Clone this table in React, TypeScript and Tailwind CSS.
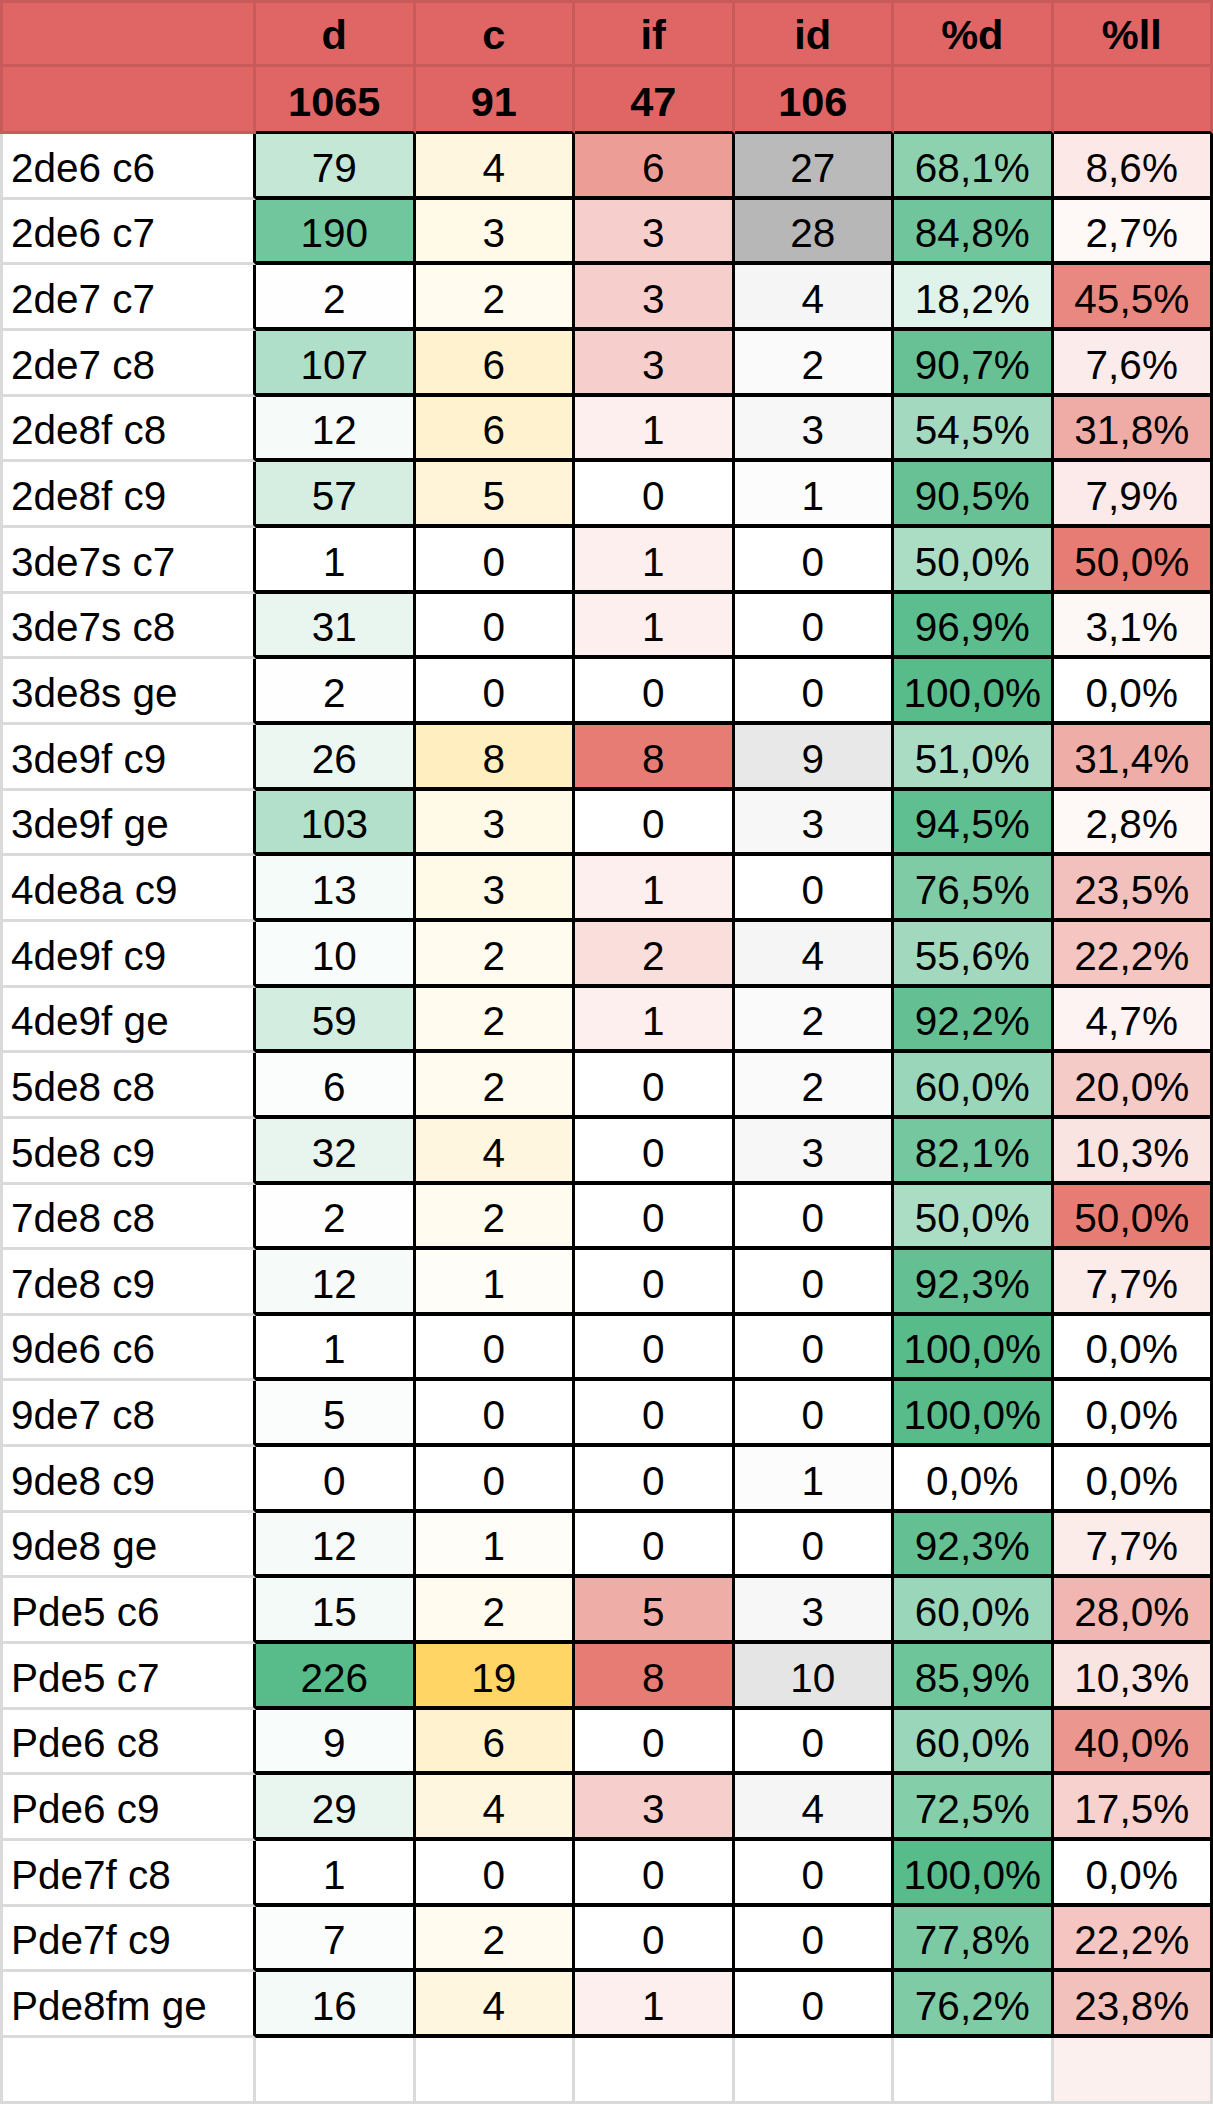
import type { CSSProperties, ReactNode } from 'react';

type Row = [string, number, number, number, number, string, string];

const rows: Row[] = [
  ['2de6 c6', 79, 4, 6, 27, '68,1%', '8,6%'],
  ['2de6 c7', 190, 3, 3, 28, '84,8%', '2,7%'],
  ['2de7 c7', 2, 2, 3, 4, '18,2%', '45,5%'],
  ['2de7 c8', 107, 6, 3, 2, '90,7%', '7,6%'],
  ['2de8f c8', 12, 6, 1, 3, '54,5%', '31,8%'],
  ['2de8f c9', 57, 5, 0, 1, '90,5%', '7,9%'],
  ['3de7s c7', 1, 0, 1, 0, '50,0%', '50,0%'],
  ['3de7s c8', 31, 0, 1, 0, '96,9%', '3,1%'],
  ['3de8s ge', 2, 0, 0, 0, '100,0%', '0,0%'],
  ['3de9f c9', 26, 8, 8, 9, '51,0%', '31,4%'],
  ['3de9f ge', 103, 3, 0, 3, '94,5%', '2,8%'],
  ['4de8a c9', 13, 3, 1, 0, '76,5%', '23,5%'],
  ['4de9f c9', 10, 2, 2, 4, '55,6%', '22,2%'],
  ['4de9f ge', 59, 2, 1, 2, '92,2%', '4,7%'],
  ['5de8 c8', 6, 2, 0, 2, '60,0%', '20,0%'],
  ['5de8 c9', 32, 4, 0, 3, '82,1%', '10,3%'],
  ['7de8 c8', 2, 2, 0, 0, '50,0%', '50,0%'],
  ['7de8 c9', 12, 1, 0, 0, '92,3%', '7,7%'],
  ['9de6 c6', 1, 0, 0, 0, '100,0%', '0,0%'],
  ['9de7 c8', 5, 0, 0, 0, '100,0%', '0,0%'],
  ['9de8 c9', 0, 0, 0, 1, '0,0%', '0,0%'],
  ['9de8 ge', 12, 1, 0, 0, '92,3%', '7,7%'],
  ['Pde5 c6', 15, 2, 5, 3, '60,0%', '28,0%'],
  ['Pde5 c7', 226, 19, 8, 10, '85,9%', '10,3%'],
  ['Pde6 c8', 9, 6, 0, 0, '60,0%', '40,0%'],
  ['Pde6 c9', 29, 4, 3, 4, '72,5%', '17,5%'],
  ['Pde7f c8', 1, 0, 0, 0, '100,0%', '0,0%'],
  ['Pde7f c9', 7, 2, 0, 0, '77,8%', '22,2%'],
  ['Pde8fm ge', 16, 4, 1, 0, '76,2%', '23,8%'],
];

const headers = ['d', 'c', 'if', 'id', '%d', '%ll'];
const totals = ['1065', '91', '47', '106', '', ''];

// colour scales: white at 0 → colour at max (sheets-style conditional formatting)
const GREEN: [number, number, number] = [87, 187, 138];
const YELLOW: [number, number, number] = [255, 214, 102];
const RED: [number, number, number] = [230, 124, 115];
const GRAY: [number, number, number] = [183, 183, 183];

const scales: { to: [number, number, number]; max: number }[] = [
  { to: GREEN, max: 226 },
  { to: YELLOW, max: 19 },
  { to: RED, max: 8 },
  { to: GRAY, max: 28 },
  { to: GREEN, max: 100 },
  { to: RED, max: 50 },
];

function shade(col: number, value: number) {
  const { to, max } = scales[col];
  const t = Math.max(0, Math.min(1, value / max));
  const c = to.map((v) => Math.round(255 + (v - 255) * t));
  return `rgb(${c[0]}, ${c[1]}, ${c[2]})`;
}

const pct = (s: string) => parseFloat(s.replace('%', '').replace(',', '.'));

function Cell({ className, style, children }: { className: string; style?: CSSProperties; children?: ReactNode }) {
  return (
    <div className={`box-border flex items-end leading-[40px] ${className}`} style={style}>
      <span className="block w-full whitespace-nowrap">{children}</span>
    </div>
  );
}

export default function App() {
  return (
    <div className="h-[2104px] w-[1213px] overflow-hidden bg-white font-['Liberation_Sans',Arial,sans-serif] text-black">
      <div className="grid grid-cols-[256px_repeat(6,159.5px)]">
        {/* header row 1 */}
        <Cell className="h-[67px] border-[3px] border-[#c95a5a] bg-[#e06666]" />
        {headers.map((h) => (
          <Cell
            key={h}
            className="h-[67px] border-t-[3px] border-r-[3px] border-b-[3px] border-[#c95a5a] bg-[#e06666] pb-[9px] text-center text-[41.5px] font-bold"
          >
            {h}
          </Cell>
        ))}

        {/* header row 2 */}
        <Cell className="h-[67px] border-l-[3px] border-r-[3px] border-b-[3px] border-[#c95a5a] bg-[#e06666]" />
        {totals.map((t, i) => (
          <Cell
            key={i}
            className="h-[67px] border-r-[3px] border-b-[3px] border-r-[#c95a5a] border-b-black bg-[#e06666] pb-[9px] text-center text-[41.5px] font-bold"
          >
            {t}
          </Cell>
        ))}

        {rows.map((r) => (
          <div key={r[0]} className="contents">
            <Cell className="h-[65.66px] border-l-[3px] border-r-[3px] border-b-[3px] border-l-[#dadada] border-b-[#dadada] border-r-black bg-white pb-[9px] pl-[8px] text-[40.5px]">
              {r[0]}
            </Cell>
            {[r[1], r[2], r[3], r[4]].map((v, i) => (
              <Cell
                key={i}
                className="h-[65.66px] border-r-[3px] border-b-[4px] border-black pb-[8px] text-center text-[40.5px]"
                style={{ backgroundColor: shade(i, v) }}
              >
                {v}
              </Cell>
            ))}
            {[r[5], r[6]].map((v, i) => (
              <Cell
                key={i}
                className="h-[65.66px] border-r-[3px] border-b-[4px] border-black pb-[8px] text-center text-[40.5px]"
                style={{ backgroundColor: shade(4 + i, pct(v)) }}
              >
                {v}
              </Cell>
            ))}
          </div>
        ))}

        {/* trailing empty row */}
        <Cell className="h-[66px] border-l-[3px] border-r-[3px] border-b-[3px] border-[#dadada] bg-white" />
        {[0, 1, 2, 3, 4].map((i) => (
          <Cell key={i} className="h-[66px] border-r-[3px] border-b-[3px] border-[#dadada] bg-white" />
        ))}
        <Cell className="h-[66px] border-r-[3px] border-b-[3px] border-[#dadada] bg-[#fcf0ef]" />
      </div>
    </div>
  );
}
